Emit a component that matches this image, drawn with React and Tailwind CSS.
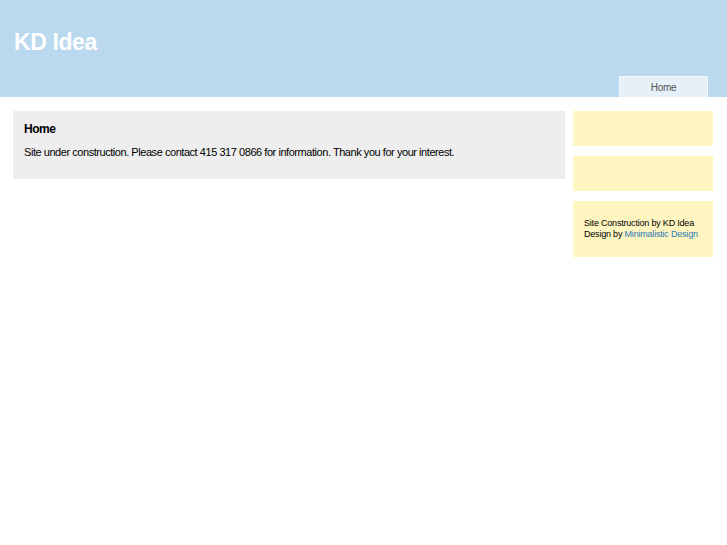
import React from 'react';

export default function App() {
  return (
    <div className="min-h-[545px] bg-white font-['Liberation_Sans',Arial,sans-serif] text-black">
      {/* Header */}
      <div className="h-[97px] bg-[#bad8ee] flex flex-col justify-between">
        <h1 className="pl-[14px] pt-[29px] text-[23px] leading-[26px] font-bold text-white tracking-[-0.4px]">KD Idea</h1>
        <div className="flex justify-end pr-[19px]">
          <div className="w-[89px] h-[21px] bg-[#e6f0f8] border-x border-t border-white/70 flex items-center justify-center text-[10px] text-[#555] tracking-[-0.3px]">
            Home
          </div>
        </div>
      </div>

      {/* Body */}
      <div className="flex pt-[14px] pl-[13px] gap-[8px]">
        <div className="w-[552px] h-[68px] bg-[#eeeeee] px-[11px] pt-[11px]">
          <h2 className="text-[12px] leading-[14px] font-bold tracking-[-0.5px]">Home</h2>
          <p className="mt-[9px] text-[11px] leading-[14px] tracking-[-0.45px]">
            Site under construction. Please contact 415 317 0866 for information. Thank you for your interest.
          </p>
        </div>
        <div className="w-[140px] flex flex-col gap-[10px]">
          <div className="h-[35px] bg-[#fff5c0]" />
          <div className="h-[35px] bg-[#fff5c0]" />
          <div className="h-[56px] bg-[#fff5c0] pl-[11px] pt-[17px] text-[9px] leading-[11px] tracking-[-0.2px]">
            <div>Site Construction by KD Idea</div>
            <div>
              Design by <a href="#" className="text-[#2a79b6]">Minimalistic Design</a>
            </div>
          </div>
        </div>
      </div>
    </div>
  );
}
